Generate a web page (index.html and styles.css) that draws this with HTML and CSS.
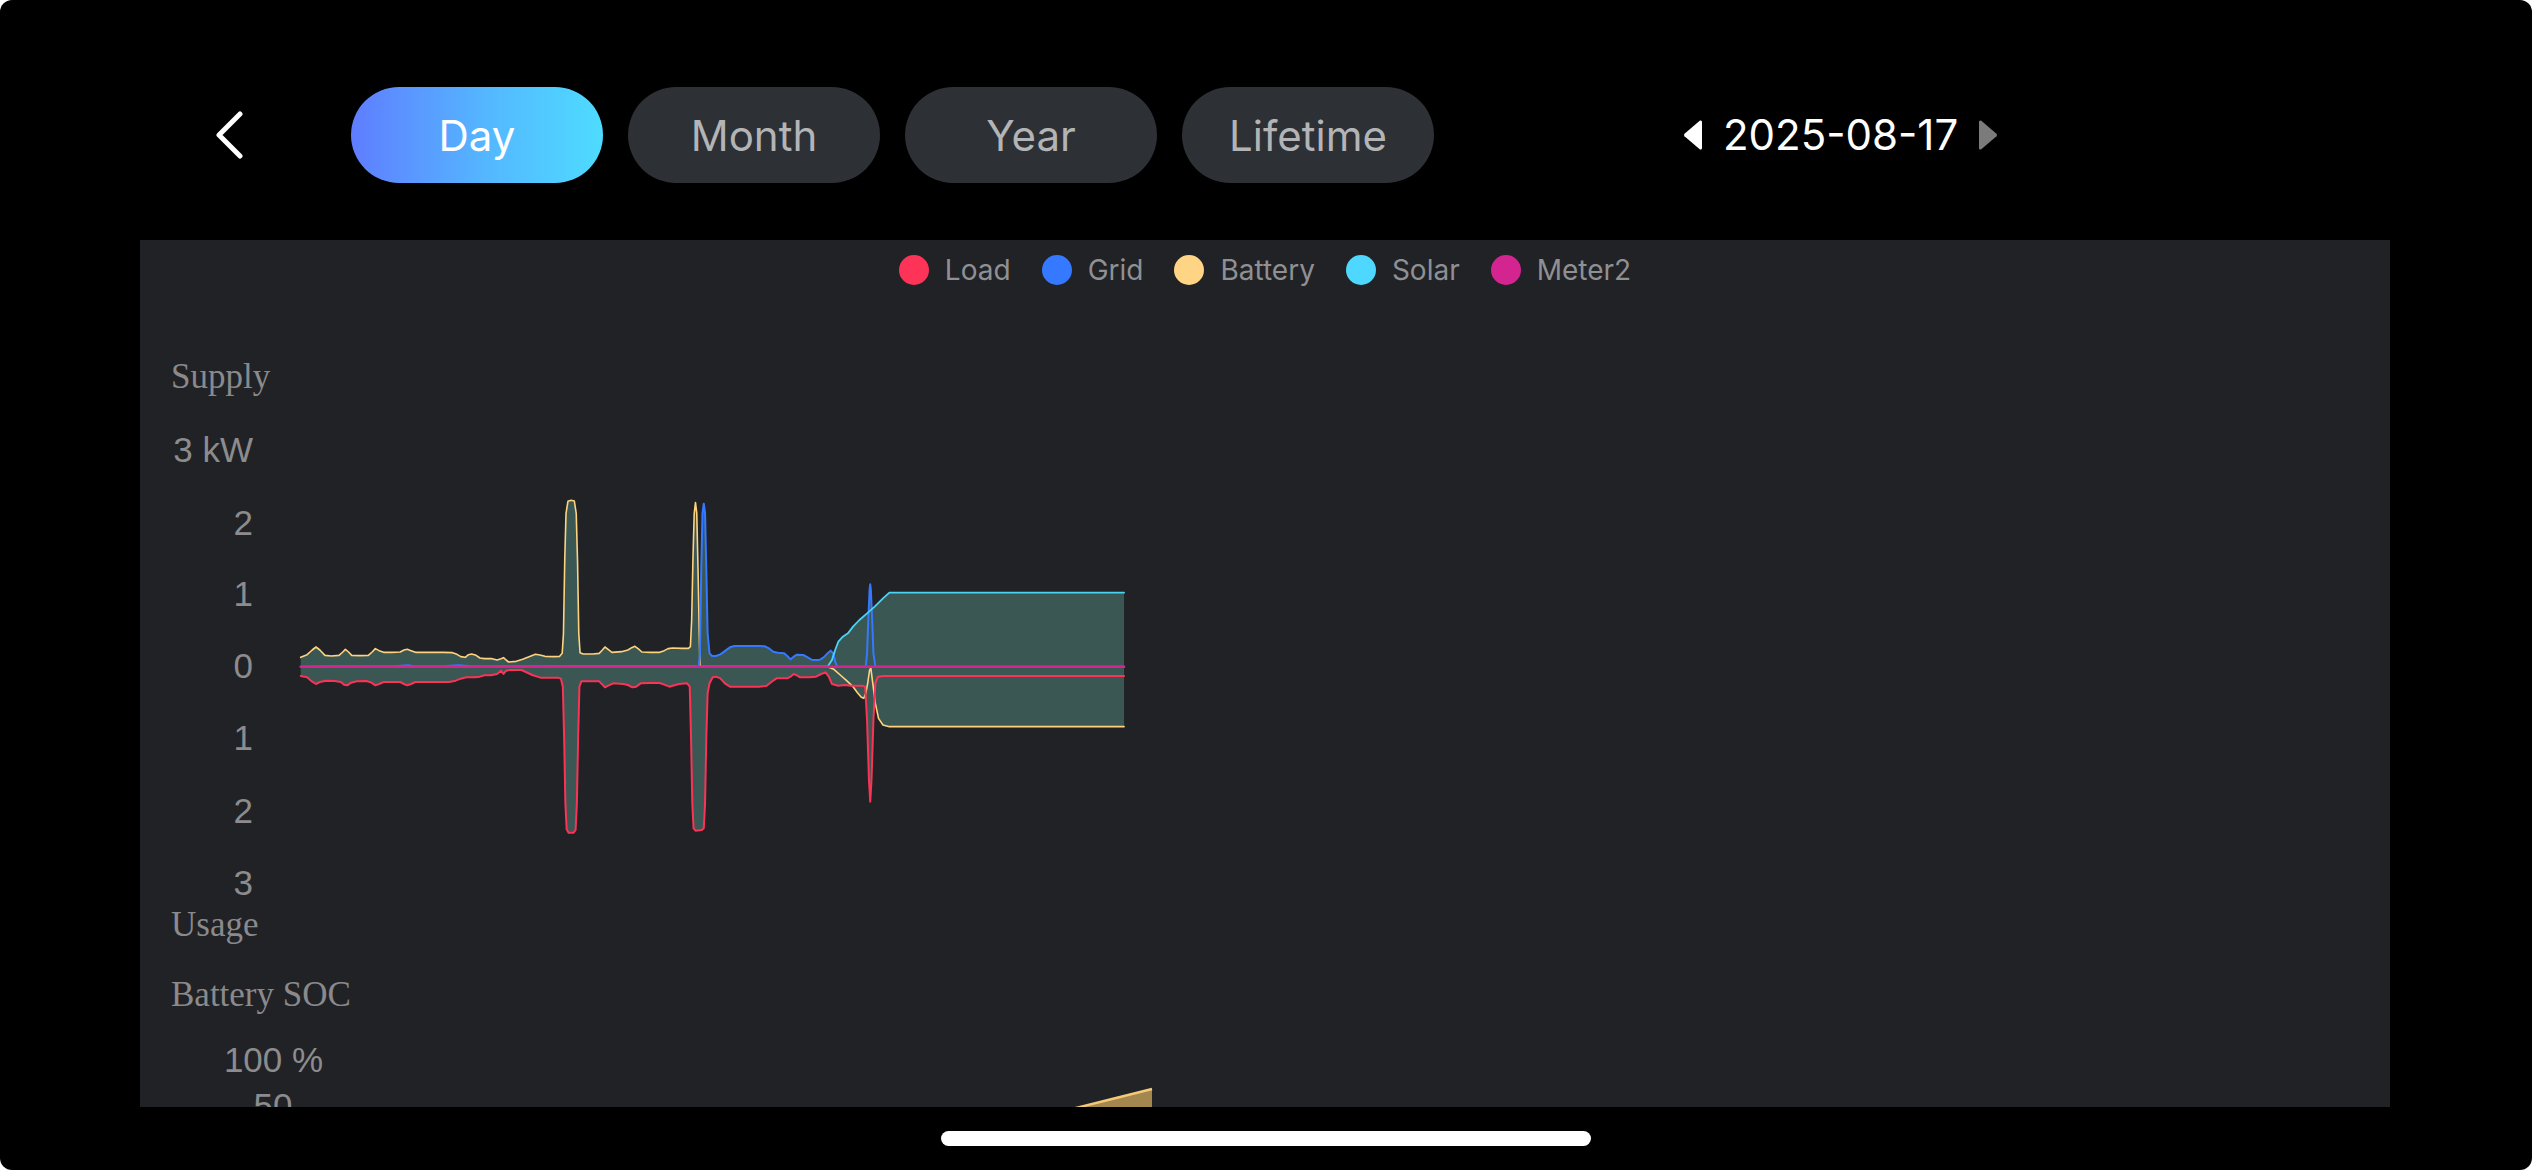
FILE: index.html
```html
<!DOCTYPE html>
<html lang="en">
<head>
<meta charset="utf-8">
<title>Energy chart</title>
<link rel="stylesheet" href="styles.css">
</head>
<body>
<div class="screen">
  <header class="topbar">
    <button class="back" aria-label="Back">
      <svg width="30" height="48" viewBox="0 0 30 48"><polyline points="26,3 5,24 26,45" fill="none" stroke="#fff" stroke-width="5" stroke-linecap="round" stroke-linejoin="round"/></svg>
    </button>
    <nav class="tabs">
      <div class="tab active">Day</div>
      <div class="tab">Month</div>
      <div class="tab">Year</div>
      <div class="tab">Lifetime</div>
    </nav>
    <div class="date">
      <svg class="arrow" width="19" height="32" viewBox="0 0 19 32"><path d="M17 1.5 Q19 1 19 3 V29 Q19 31 17 30.5 L1.5 17.2 Q0.5 16 1.5 14.8 Z" fill="#fff"/></svg>
      <span class="date-text">2025-08-17</span>
      <svg class="arrow" width="19" height="32" viewBox="0 0 19 32"><path d="M2 1.5 Q0 1 0 3 V29 Q0 31 2 30.5 L17.5 17.2 Q18.5 16 17.5 14.8 Z" fill="#7b7b7b"/></svg>
    </div>
  </header>

  <section class="panel">
    <div class="legend">
      <div class="item"><span class="dot load"></span>Load</div>
      <div class="item"><span class="dot grid"></span>Grid</div>
      <div class="item"><span class="dot battery"></span>Battery</div>
      <div class="item"><span class="dot solar"></span>Solar</div>
      <div class="item"><span class="dot meter"></span>Meter2</div>
    </div>

    <svg class="power" width="2250" height="650" viewBox="0 0 2250 650">
      <text class="serif" x="31" y="88">Supply</text>
      <g class="ticks">
        <text x="113" y="162">3 kW</text>
        <text x="113" y="235">2</text>
        <text x="113" y="306">1</text>
        <text x="113" y="378">0</text>
        <text x="113" y="450">1</text>
        <text x="113" y="523">2</text>
        <text x="113" y="595">3</text>
      </g>
      <text class="serif" x="31" y="636">Usage</text>

      <g transform="translate(0,120) scale(0.63776,0.33333)">
        <!-- upper area -->
        <polygon class="area" points="252,740 252,712 262,704 270,690 276,681 282,690 290,706 300,708 312,706 318,696 322,688 327,696 332,706 345,707 358,706 364,696 369,686 375,692 382,697 395,697 408,696 414,690 419,688 425,692 432,697 445,697 460,697 475,697 490,698 497,703 503,710 510,712 515,704 520,702 527,706 533,714 540,716 552,716 560,720 566,716 570,713 574,720 578,726 590,724 600,718 610,710 620,703 627,705 635,709 650,710 658,709 662,700 664,640 666,420 668,280 671,244 676,241 681,243 684,280 686,420 688,640 690,698 695,702 710,702 720,700 725,690 729,681 734,688 740,697 755,695 765,690 771,683 776,679 781,686 787,696 800,697 815,697 822,692 828,686 835,684 850,685 860,685 863,680 865,600 867,420 869,280 871,248 873,280 875,450 877,650 878,700 880,450 882,280 884,251 886,280 888,450 890,640 893,700 897,708 903,708 910,703 918,692 925,682 932,678 950,678 970,678 980,679 987,686 993,695 1000,698 1010,700 1015,708 1020,718 1025,710 1030,704 1040,705 1047,712 1054,720 1065,720 1072,712 1078,700 1083,692 1087,700 1090,690 1095,665 1102,650 1110,640 1118,620 1128,600 1140,580 1142,575 1144,510 1145,493 1146,510 1148,568 1152,560 1165,535 1175,518 1543,518 1543,740"/>
        <!-- lower area -->
        <polygon class="area" points="252,740 252,768 262,772 270,785 276,792 282,786 292,782 305,783 315,786 320,794 325,796 331,788 340,784 355,783 363,788 369,796 375,792 382,786 395,786 408,786 414,792 419,796 425,792 432,786 445,786 470,786 485,786 495,782 503,776 512,772 525,772 533,770 540,766 550,766 560,762 566,752 570,762 574,752 580,750 598,750 605,756 615,765 628,773 645,773 655,773 660,776 663,800 665,950 667,1150 669,1228 672,1238 680,1238 683,1230 685,1150 687,950 689,800 692,784 705,784 720,784 725,794 729,802 735,796 742,790 758,792 765,795 772,802 778,800 785,790 800,789 815,789 822,794 830,800 845,792 858,790 862,800 864,950 866,1150 868,1225 871,1232 881,1230 884,1225 886,1150 888,950 890,820 893,790 898,772 903,770 910,775 917,790 925,800 940,800 970,800 982,798 990,786 998,775 1015,775 1020,770 1025,762 1030,766 1035,772 1050,772 1060,770 1068,762 1075,757 1080,770 1085,792 1095,797 1105,795 1118,800 1125,818 1131,832 1135,835 1138,820 1140,900 1143,1080 1145,1145 1147,1080 1150,900 1153,850 1158,895 1165,915 1175,920 1543,920 1543,740"/>

        <!-- battery (yellow) -->
        <polyline class="ln yellow" points="252,712 262,704 270,690 276,681 282,690 290,706 300,708 312,706 318,696 322,688 327,696 332,706 345,707 358,706 364,696 369,686 375,692 382,697 395,697 408,696 414,690 419,688 425,692 432,697 445,697 460,697 475,697 490,698 497,703 503,710 510,712 515,704 520,702 527,706 533,714 540,716 552,716 560,720 566,716 570,713 574,720 578,726 590,724 600,718 610,710 620,703 627,705 635,709 650,710 658,709 662,700 664,640 666,420 668,280 671,244 676,241 681,243 684,280 686,420 688,640 690,698 695,702 710,702 720,700 725,690 729,681 734,688 740,697 755,695 765,690 771,683 776,679 781,686 787,696 800,697 815,697 822,692 828,686 835,684 850,685 860,685 863,680 865,600 867,420 869,280 871,248 873,280 875,450 877,650 878,740 1078,740 1088,748 1098,765 1108,782 1118,800 1125,818 1131,832 1135,835 1138,820 1141,790 1144,750 1146,745 1149,790 1153,850 1158,895 1165,915 1175,920 1543,920"/>
        <!-- load (red) -->
        <polyline class="ln red" points="252,768 262,772 270,785 276,792 282,786 292,782 305,783 315,786 320,794 325,796 331,788 340,784 355,783 363,788 369,796 375,792 382,786 395,786 408,786 414,792 419,796 425,792 432,786 445,786 470,786 485,786 495,782 503,776 512,772 525,772 533,770 540,766 550,766 560,762 566,752 570,762 574,752 580,750 598,750 605,756 615,765 628,773 645,773 655,773 660,776 663,800 665,950 667,1150 669,1228 672,1238 680,1238 683,1230 685,1150 687,950 689,800 692,784 705,784 720,784 725,794 729,802 735,796 742,790 758,792 765,795 772,802 778,800 785,790 800,789 815,789 822,794 830,800 845,792 858,790 862,800 864,950 866,1150 868,1225 871,1232 881,1230 884,1225 886,1150 888,950 890,820 893,790 898,772 903,770 910,775 917,790 925,800 940,800 970,800 982,798 990,786 998,775 1015,775 1020,770 1025,762 1030,766 1035,772 1050,772 1060,770 1068,762 1075,757 1080,770 1085,792 1095,797 1105,795 1115,797 1125,797 1132,797 1137,800 1140,900 1143,1080 1145,1145 1147,1080 1150,900 1153,790 1157,770 1165,768 1543,768"/>
        <!-- grid (blue) -->
        <polyline class="ln blue" points="252,740 300,739 400,739 420,736 430,739 480,738 500,736 520,739 600,739 700,738 870,738 876,740 878,700 880,450 882,280 884,251 886,280 888,450 890,640 893,700 897,708 903,708 910,703 918,692 925,682 932,678 950,678 970,678 980,679 987,686 993,695 1000,698 1010,700 1015,708 1020,718 1025,710 1030,704 1040,705 1047,712 1054,720 1065,720 1072,712 1078,700 1083,692 1087,700 1090,725 1093,740 1138,740 1140,700 1142,600 1144,510 1145,493 1146,510 1148,600 1150,700 1153,740 1543,740"/>
        <!-- solar (cyan) -->
        <polyline class="ln cyan" points="1078,740 1085,720 1090,690 1095,665 1102,650 1110,640 1118,620 1128,600 1140,580 1152,560 1165,535 1175,518 1543,518"/>
        <!-- meter2 (magenta) -->
        <line class="ln magenta" x1="252" y1="740" x2="1543" y2="740"/>
      </g>
    </svg>

    <svg class="soc" width="2250" height="200" viewBox="0 0 2250 200">
      <text class="serif" x="31" y="56">Battery SOC</text>
      <g class="ticks mid">
        <text x="133.5" y="122">100 %</text>
        <text x="133" y="168">50</text>
      </g>
      <polygon class="soc-area" points="860,177 1012,139 1012,200 860,200"/>
      <line class="soc-line" x1="860" y1="177" x2="1012" y2="139"/>
    </svg>
  </section>

  <div class="home-bar"></div>
</div>
</body>
</html>
```

FILE: styles.css
```css
html, body {
  margin: 0;
  padding: 0;
  background: #ffffff;
}

.screen {
  width: 2532px;
  height: 1170px;
  background: #000000;
  border-radius: 12px;
  overflow: hidden;
  display: flex;
  flex-direction: column;
  font-family: Inter, "Liberation Sans", sans-serif;
}

.topbar {
  display: flex;
  align-items: center;
  height: 96px;
  margin-top: 87px;
  padding-left: 214px;
  flex: none;
}

.back {
  background: none;
  border: 0;
  padding: 0;
  width: 30px;
  height: 48px;
  margin-right: 107px;
  display: flex;
}

.tabs {
  display: flex;
  gap: 25px;
}

.tab {
  width: 252px;
  height: 96px;
  border-radius: 48px;
  background: #2d3035;
  color: #b3b4b6;
  font-size: 42px;
  display: flex;
  align-items: center;
  justify-content: center;
}

.tab.active {
  background: linear-gradient(90deg, #5f7dff 0%, #54b8ff 55%, #4edcff 100%);
  color: #ffffff;
}

.date {
  margin-left: 249px;
  display: flex;
  align-items: center;
  gap: 21px;
}

.arrow {
  display: block;
}

.date-text {
  color: #ffffff;
  font-size: 42px;
  line-height: 1;
}

.panel {
  margin-top: 57px;
  margin-left: 140px;
  width: 2250px;
  height: 867px;
  flex: none;
  background: #212226;
  overflow: hidden;
  display: flex;
  flex-direction: column;
}

.legend {
  height: 60px;
  flex: none;
  display: flex;
  justify-content: center;
  align-items: center;
  gap: 31px;
  color: #8f9093;
  font-size: 28px;
}

.item {
  display: flex;
  align-items: center;
  gap: 16px;
}

.dot {
  width: 30px;
  height: 30px;
  border-radius: 50%;
  display: block;
}

.dot.load { background: #fd3358; }
.dot.grid { background: #3479ff; }
.dot.battery { background: #ffd485; }
.dot.solar { background: #4ed8ff; }
.dot.meter { background: #d3248f; }

.power, .soc {
  display: block;
  flex: none;
}

.serif {
  font-family: "Liberation Serif", serif;
  font-size: 35px;
  fill: #8a8a8c;
}

.ticks text {
  font-family: "Liberation Sans", sans-serif;
  font-size: 35px;
  fill: #8c8c8e;
  text-anchor: end;
}

.ticks.mid text {
  text-anchor: middle;
}

.area {
  fill: #3a5754;
  stroke: none;
}

.ln {
  fill: none;
  stroke-linejoin: round;
  stroke-linecap: round;
  vector-effect: non-scaling-stroke;
}

.yellow { stroke: #ffd27e; stroke-width: 1.6; }
.red { stroke: #fb3356; stroke-width: 2; }
.blue { stroke: #3479ff; stroke-width: 2; }
.cyan { stroke: #4bd3f5; stroke-width: 1.8; }
.magenta { stroke: #d3248f; stroke-width: 2.5; }

.soc-area {
  fill: #a4864f;
}

.soc-line {
  stroke: #f4c978;
  stroke-width: 2.5;
}

.home-bar {
  margin-top: 24px;
  margin-left: 941px;
  width: 650px;
  height: 15px;
  border-radius: 8px;
  background: #ffffff;
}
```
